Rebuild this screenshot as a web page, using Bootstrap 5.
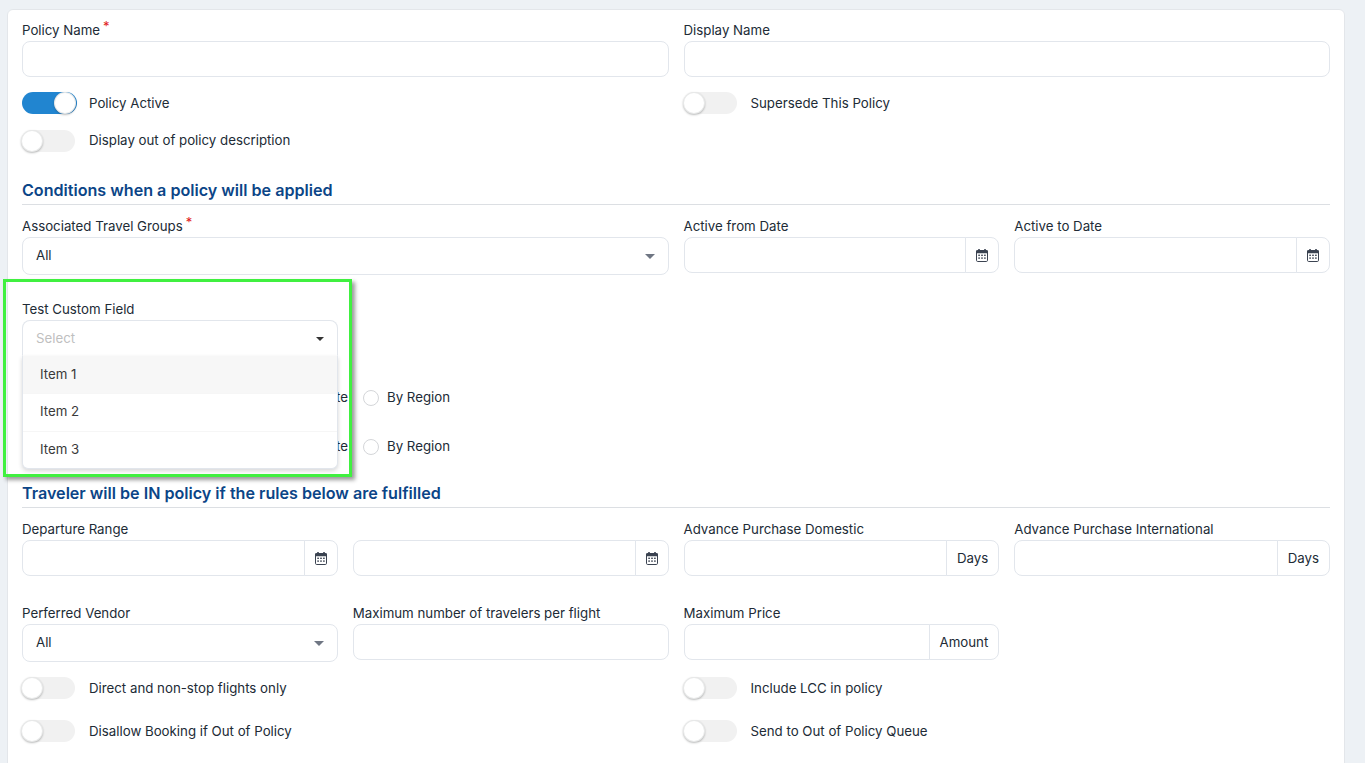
<!DOCTYPE html>
<html lang="en">
<head>
<meta charset="utf-8">
<title>Policy</title>
<link href="https://cdn.jsdelivr.net/npm/bootstrap@5.3.0/dist/css/bootstrap.min.css" rel="stylesheet">
<style>
html,body{height:763px;overflow:hidden}
body{background:#edf1f5;font-family:Inter,"Liberation Sans",sans-serif;font-size:13.28px;color:#212b36;padding:9px 20px 0 7px}
.sheet{background:#fff;border:1px solid #e3e6ea;border-radius:6px;padding:11px 14px 60px;height:900px;position:relative}
.frow{--bs-gutter-x:15px;--bs-gutter-y:0}
.flabel{display:block;font-size:13.28px;line-height:18px;margin:0 0 2px;color:#212b36;font-weight:400;white-space:nowrap}
.req{color:#e02020;font-size:13px;position:relative;top:-4px;left:3px;line-height:0}
.fld,.form-control.fld{height:36px;border:1px solid #e2e6ec;border-radius:8px;font-size:13.28px;box-shadow:none}
.sel{height:38px;border:1px solid #e2e6ec;border-radius:8px;font-size:13.28px;color:#212b36;padding:0 13px;background-image:none;display:flex;align-items:center;justify-content:space-between}
.caret{width:0;height:0;border-left:5.5px solid transparent;border-right:5.5px solid transparent;border-top:5px solid #6f7683}
.adorn{background:#fff;border:1px solid #e2e6ec;border-radius:0 8px 8px 0;font-size:13.28px;color:#212b36;padding:1px 10px 0;height:36px}
.input-group>.fld{border-radius:8px 0 0 8px}
.adorn-ico{padding:0 10px 0 10px}
.form-check-input.tgl{appearance:none;width:53px;height:22px;margin:0;flex:none;float:none;border:0;border-radius:12px;background:#f1f1f1;position:relative;box-shadow:none}
.form-check-input.tgl::after{content:"";position:absolute;left:-1px;top:0;width:22px;height:22px;border-radius:50%;background:#fff;box-shadow:0 1px 2px 0 rgba(34,36,38,.3),0 0 0 1px rgba(34,36,38,.1) inset}
.form-check-input.tgl:checked{background:#2185d0;width:55px;margin-right:-2px}
.form-check-input.tgl:checked::after{left:32px}
.tglrow{display:flex;align-items:center;gap:14px;height:22px;font-size:13.28px;line-height:18px}
.tall{height:23px}
.tall span{padding-bottom:1px}
.secthead{font-size:16.12px;font-weight:600;line-height:24px;color:#0b4587;border-bottom:1px solid #dcdfe3;padding-bottom:2px;margin:0}
.m15{margin-top:15px}.m12{margin-top:12px}.m21{margin-top:21px}.m26{margin-top:26px}.m25{margin-top:25px}.m24{margin-top:24px}
.picker{position:relative}
.picker .sel{height:36px;border-radius:8px 8px 0 0;border-bottom-color:transparent;padding-top:1px}
.ph{color:#bfbfbf}
.caret-dk{border-left-width:4px;border-right-width:4px;border-top:4px solid #333}
.pickmenu{position:absolute;left:0;right:0;top:36px;z-index:3;background:#fff;border:1px solid #e2e6ec;border-top:0;border-radius:0 0 6px 6px;box-shadow:0 2px 4px rgba(34,36,38,.18);color:#3a3a3a}
.pickitem{height:37.5px;padding:0 17px;display:flex;align-items:center;font-size:13.28px;border-top:1px solid #f6f6f6}
.pickitem:first-child{background:#f7f7f7;border-top:0;height:37px}
.pickitem:nth-child(2){padding-bottom:1px}
.radrow{display:flex;align-items:center;height:20px;font-size:13.28px}
.radrow .hideme{width:326px;text-align:right;white-space:nowrap}
.form-check-input.rad{width:16px;height:16px;margin:0 8px 0 15px;float:none;border:1px solid #d4d6d9;flex:none}
.r1{margin-top:32px}.r2{margin-top:29px}
.hilite{position:absolute;left:-5.5px;top:269px;width:349.5px;height:198px;border:3px solid #40f040;box-shadow:3px 3px 4px rgba(0,0,0,.4);z-index:4;pointer-events:none}
.mt28{margin-top:28px}
.cal{display:block;width:12px;height:13px}
</style>
</head>
<body>
<svg width="0" height="0" class="d-none"><symbol id="cal" viewBox="0 0 12 13"><rect x="2.2" y="0" width="1.6" height="2.5" fill="#3b4351"/><rect x="8.2" y="0" width="1.6" height="2.5" fill="#3b4351"/><rect x=".5" y="1.5" width="11" height="11" rx="1.2" fill="#fff" stroke="#3b4351"/><rect x="0" y="1.2" width="12" height="3" rx="1" fill="#3b4351"/><g fill="#3b4351"><rect x="2.3" y="5.6" width="1.6" height="1.4"/><rect x="5.2" y="5.6" width="1.6" height="1.4"/><rect x="8.1" y="5.6" width="1.6" height="1.4"/><rect x="2.3" y="8.4" width="1.6" height="1.4"/><rect x="5.2" y="8.4" width="1.6" height="1.4"/><rect x="8.1" y="8.4" width="1.6" height="1.4"/></g></symbol></svg>

<div class="sheet card">
  <div class="row frow">
    <div class="col-6"><label class="flabel">Policy Name<span class="req">*</span></label><input class="form-control fld" type="text"></div>
    <div class="col-6"><label class="flabel">Display Name</label><input class="form-control fld" type="text"></div>
  </div>
  <div class="row frow m15">
    <div class="col-6"><div class="tglrow"><input class="form-check-input tgl" type="checkbox" role="switch" checked><span>Policy Active</span></div></div>
    <div class="col-6"><div class="tglrow"><input class="form-check-input tgl" type="checkbox" role="switch"><span>Supersede This Policy</span></div></div>
  </div>
  <div class="tglrow tall m15"><input class="form-check-input tgl tall" type="checkbox" role="switch"><span>Display out of policy description</span></div>

  <h2 class="secthead m26">Conditions when a policy will be applied</h2>

  <div class="row frow m12">
    <div class="col-6"><label class="flabel">Associated Travel Groups<span class="req">*</span></label><div class="form-select sel"><span>All</span><span class="caret"></span></div></div>
    <div class="col-3"><label class="flabel">Active from Date</label><div class="input-group"><input class="form-control fld" type="text"><span class="input-group-text adorn adorn-ico"><svg class="cal"><use href="#cal"/></svg></span></div></div>
    <div class="col-3"><label class="flabel">Active to Date</label><div class="input-group"><input class="form-control fld" type="text"><span class="input-group-text adorn adorn-ico"><svg class="cal"><use href="#cal"/></svg></span></div></div>
  </div>

  <div class="row frow m25">
    <div class="col-3">
      <label class="flabel">Test Custom Field</label>
      <div class="picker">
        <div class="form-select sel"><span class="ph">Select</span><span class="caret caret-dk"></span></div>
        <div class="pickmenu"><div class="pickitem">Item 1</div><div class="pickitem">Item 2</div><div class="pickitem">Item 3</div></div>
      </div>
    </div>
  </div>

  <div class="radrow r1"><span class="hideme">By Country / State</span><input class="form-check-input rad" type="radio"><span>By Region</span></div>
  <div class="radrow r2"><span class="hideme">By Country / State</span><input class="form-check-input rad" type="radio"><span>By Region</span></div>

  <h2 class="secthead m24">Traveler will be IN policy if the rules below are fulfilled</h2>

  <div class="row frow m12">
    <div class="col-3"><label class="flabel">Departure Range</label><div class="input-group"><input class="form-control fld" type="text"><span class="input-group-text adorn adorn-ico"><svg class="cal"><use href="#cal"/></svg></span></div></div>
    <div class="col-3"><label class="flabel">&nbsp;</label><div class="input-group"><input class="form-control fld" type="text"><span class="input-group-text adorn adorn-ico"><svg class="cal"><use href="#cal"/></svg></span></div></div>
    <div class="col-3"><label class="flabel">Advance Purchase Domestic</label><div class="input-group"><input class="form-control fld" type="text"><span class="input-group-text adorn">Days</span></div></div>
    <div class="col-3"><label class="flabel">Advance Purchase International</label><div class="input-group"><input class="form-control fld" type="text"><span class="input-group-text adorn">Days</span></div></div>
  </div>

  <div class="row frow mt28">
    <div class="col-3"><label class="flabel">Perferred Vendor</label><div class="form-select sel"><span>All</span><span class="caret"></span></div></div>
    <div class="col-3"><label class="flabel">Maximum number of travelers per flight</label><input class="form-control fld" type="text"></div>
    <div class="col-3"><label class="flabel">Maximum Price</label><div class="input-group"><input class="form-control fld" type="text"><span class="input-group-text adorn">Amount</span></div></div>
  </div>

  <div class="row frow m15">
    <div class="col-6"><div class="tglrow"><input class="form-check-input tgl" type="checkbox" role="switch"><span>Direct and non-stop flights only</span></div></div>
    <div class="col-6"><div class="tglrow"><input class="form-check-input tgl" type="checkbox" role="switch"><span>Include LCC in policy</span></div></div>
  </div>
  <div class="row frow m21">
    <div class="col-6"><div class="tglrow"><input class="form-check-input tgl" type="checkbox" role="switch"><span>Disallow Booking if Out of Policy</span></div></div>
    <div class="col-6"><div class="tglrow"><input class="form-check-input tgl" type="checkbox" role="switch"><span>Send to Out of Policy Queue</span></div></div>
  </div>

  <div class="hilite"></div>
</div>
<script src="https://cdn.jsdelivr.net/npm/bootstrap@5.3.0/dist/js/bootstrap.bundle.min.js"></script>
</body>
</html>
